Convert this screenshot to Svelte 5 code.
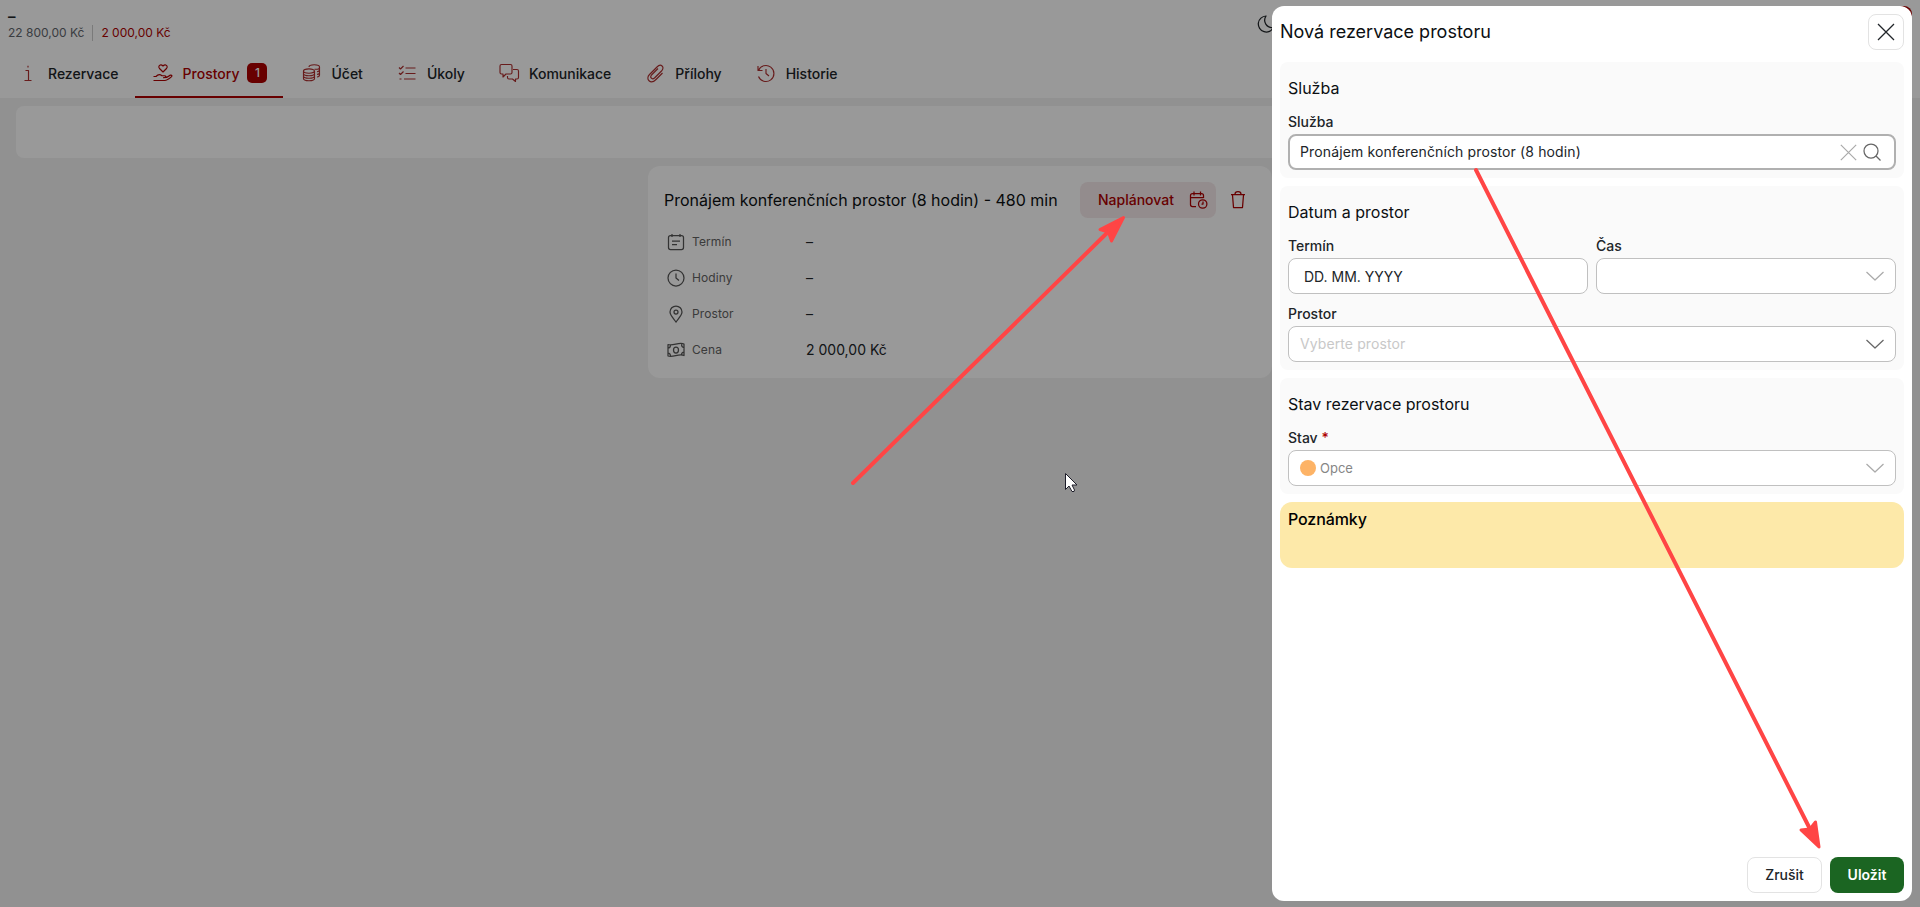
<script lang="ts">
	const tabs = [
		{ icon: 'info', label: 'Rezervace' },
		{ icon: 'hand', label: 'Prostory', count: 1 },
		{ icon: 'coins', label: 'Účet' },
		{ icon: 'tasks', label: 'Úkoly' },
		{ icon: 'chat', label: 'Komunikace' },
		{ icon: 'clip', label: 'Přílohy' },
		{ icon: 'history', label: 'Historie' },
	]
	const rows = [
		{ icon: 'note', label: 'Termín', value: '–' },
		{ icon: 'clock', label: 'Hodiny', value: '–' },
		{ icon: 'pin', label: 'Prostor', value: '–' },
		{ icon: 'cash', label: 'Cena', value: '2 000,00 Kč' },
	]
	const icons: Record<string, string> = {
		info: 'M9.500 9.500h3v10M8.500 19.500h7M12 4.800v1.700',
		hand: 'M12 11L8.500 7.500C6.500 5 9.500 2.500 12 5C14.500 2.500 17.500 5 15.500 7.500zM2.500 19.500h11.500c2 0 6-3 7-4.500c-.5-1.500-2-1-3 0c-1.500 1.500-3 1.700-6 1.700M12 16.700h2c1.500-.5 1-2-.5-2H11c-2-1.500-4-1.500-6 .8H2.500',
		coins: 'M4.500 10a5.500 2.200 0 1 0 11 0a5.500 2.200 0 1 0-11 0v7.500c0 3 11 3 11 0v-7.500M4.500 12.500c0 3 11 3 11 0M4.500 15c0 3 11 3 11 0M10 6c0-3 10.500-3 10.500 0s-2 2.200-5 2.200M20.500 6v8c0 1-1 1.800-2.500 2M20.500 8.700c0 1-1 1.800-2.500 2M20.500 11.400c0 1-1 1.800-2.500 2',
		tasks: 'M4 6.500l1.500 1.500l3-3M4 12l1.500 1.500l3-3M4.500 18h2M10.500 7h10M10.500 12.500h10M9 18h11.500',
		chat: 'M4.500 3.500h9q1.500 0 1.500 1.500v6.500q0 1.500-1.500 1.500H9l-3 3v-3H4.500Q3 13 3 11.500V5q0-1.500 1.500-1.500zM16 8.500h4q1.500 0 1.500 1.500v6.500q0 1.500-1.500 1.500h-1.500v2.500l-3-2.500H12q-1.500 0-1.500-1.500V15',
		clip: 'M19.500 12l-6.500 6.500c-5.500 5.500-11-.5-6.500-5l7.500-7.500c4-4 8 0 4.500 4l-7 7c-2.500 2-5-.5-3-3l6.500-6.500',
		history: 'M4 5v4.500h4.500M4.500 9.500a8 8 0 1 1 0 6M12 8v4.500l3 2.500',
		note: 'M6.500 5.500h11q2 0 2 2v10q0 2-2 2h-11q-2 0-2-2v-10q0-2 2-2zM8 4v3M16 4v3M8 11h8M8 14.500h5',
		clock: 'M4 12a8 8 0 1 0 16 0a8 8 0 1 0-16 0M12 7.500V12l3 2.500',
		pin: 'M12 20c-3-4-6-7-6-10a6 6 0 0 1 12 0c0 3-3 6-6 10zM10 10a2 2 0 1 0 4 0a2 2 0 1 0-4 0',
		cash: 'M4 6.500c5 2 11-3 16-.5v11.500c-5-2.500-11 2.500-16 .5zM9.500 12a2.500 3 0 1 0 5 0a2.500 3 0 1 0-5 0M4 10q2.500 0 2.500-3M20 9.500q-2.500 0-2.500-4M4 15q2.500 0 2.500 3.500M20 14q-2.500 0-2.500 3',
		plan: 'M10 18.500H6.500q-2 0-2-2v-9q0-2 2-2h9q2 0 2 2v2.500M8 3.500v4M14.500 3.500v4M4.500 9.500h13M12.500 16a4.200 4.200 0 1 0 8.400 0a4.200 4.200 0 1 0-8.400 0M17 13.500v2.500h-1.500',
		trash: 'M5 6.500h14M9 6q0-2.500 3-2.500t3 2.500M6.500 7l1 12.500h9l1-12.500',
		close: 'M4 4l16 16M20 4L4 20',
		search: 'M4 11a7 7 0 1 0 14 0a7 7 0 1 0-14 0M16 16l4.500 4.500',
		chevron: 'M3.500 8l8.500 8l8.500-8',
		moon: 'M12 4a8 8 0 1 0 7.500 11.500c-7 1-11-6-7.500-11.500z',
	}
</script>

{#snippet icon(name: string, size = 24)}
	<svg class="icon" width={size} height={size} viewBox="0 0 24 24"><path d={icons[name]} /></svg>
{/snippet}

{#snippet select(color: string)}
	<span class="chevron {color}">{@render icon('chevron')}</span>
{/snippet}

<div class="page">
	<header>
		<div class="top">
			<div>
				<div class="name">–</div>
				<div class="sums">
					<span>22 800,00 Kč</span>
					<span class="due">2 000,00 Kč</span>
				</div>
			</div>
			<div class="tools">
				{@render icon('moon')}
				<span class="avatar"></span>
			</div>
		</div>
		<nav>
			{#each tabs as tab}
				<a class:active={tab.count}>
					{@render icon(tab.icon)}
					<span>{tab.label}</span>
					{#if tab.count}<b>{tab.count}</b>{/if}
				</a>
			{/each}
		</nav>
	</header>

	<main>
		<div class="strip"></div>
		<article>
			<div class="card-head">
				<h2>Pronájem konferenčních prostor (8 hodin) - 480 min</h2>
				<button class="plan"><span>Naplánovat</span> {@render icon('plan')}</button>
				<button class="trash" aria-label="Smazat">{@render icon('trash')}</button>
			</div>
			{#each rows as row}
				<div class="row">
					{@render icon(row.icon)}
					<span class="key">{row.label}</span>
					<span>{row.value}</span>
				</div>
			{/each}
		</article>
	</main>
</div>

<div class="overlay">
	<aside>
		<div class="drawer-head">
			<h1>Nová rezervace prostoru</h1>
			<button class="close" aria-label="Zavřít">{@render icon('close', 24)}</button>
		</div>

		<section>
			<h3>Služba</h3>
			<div class="label">Služba</div>
			<div class="field focused">
				<span class="service">Pronájem konferenčních prostor (8 hodin)</span>
				<span class="light">{@render icon('close', 23)}</span>
				<span class="mid">{@render icon('search')}</span>
			</div>
		</section>

		<section>
			<h3>Datum a prostor</h3>
			<div class="pair">
				<div>
					<div class="label">Termín</div>
					<div class="field date"><span>DD. MM. YYYY</span></div>
				</div>
				<div>
					<div class="label">Čas</div>
					<div class="field">{@render select('light')}</div>
				</div>
			</div>
			<div class="label">Prostor</div>
			<div class="field"><span class="placeholder">Vyberte prostor</span>{@render select('mid')}</div>
		</section>

		<section>
			<h3>Stav rezervace prostoru</h3>
			<div class="label">Stav <em>*</em></div>
			<div class="field">
				<i class="dot"></i><span class="state">Opce</span>{@render select('light')}
			</div>
		</section>

		<div class="notes">Poznámky</div>

		<footer>
			<button class="cancel">Zrušit</button>
			<button class="save">Uložit</button>
		</footer>
	</aside>
</div>

<svg class="marks" width="1920" height="907" viewBox="0 0 1920 907">
	<g class="arrow">
		<path d="M853 483L1109 231" />
		<path class="tip" d="M1123.500 217.500L1100 229.500L1108.500 232L1111.500 241z" />
	</g>
	<g class="arrow">
		<path d="M1476 170L1811 831" />
		<path class="tip" d="M1819 847L1801 830L1810 829L1815.500 822z" />
	</g>
	<path class="cursor" d="M1065.500 473.500v16l3.500-3.500l3 5.500h2l.5-1.500l-2.500-5h5z" />
</svg>

<style>
	:global(body) {
		background: #f2f2f2;
		font-family: Inter, sans-serif;
		font-size: 14px;
		color: #212529;
		overflow: hidden;
	}
	h1,
	h2,
	h3 {
		margin: 0;
		font-weight: 400;
		color: #0c0f12;
	}
	button {
		font: inherit;
		padding: 0;
		border: 0;
		background: none;
		color: inherit;
		box-sizing: border-box;
		height: 36px;
		border-radius: 8px;
		display: flex;
		align-items: center;
		justify-content: center;
	}
	.icon {
		display: block;
		flex: none;
		fill: none;
		stroke: currentColor;
		stroke-width: 1.25;
		stroke-linejoin: round;
	}
	.page {
		height: 907px;
	}
	header {
		height: 98px;
		background: #fff;
	}
	.top {
		display: flex;
		justify-content: space-between;
		height: 50px;
		padding: 0 8px;
	}
	.name {
		font-size: 15px;
		font-weight: 600;
		line-height: 20px;
		padding-top: 7px;
		height: 17px;
	}
	.sums {
		display: flex;
		font-size: 12px;
		line-height: 16px;
		margin-top: 1px;
		color: #5f666d;
	}
	.due {
		color: #ad0000;
		border-left: 1px solid #ccc;
		margin-left: 8px;
		padding-left: 8px;
	}
	.tools {
		display: flex;
		width: 658px;
		padding-top: 12px;
		box-sizing: border-box;
		justify-content: space-between;
	}
	.avatar {
		width: 36px;
		height: 36px;
		border-radius: 8px;
		margin-top: -6px;
		background: #ad0000;
	}
	nav {
		display: flex;
	}
	nav a {
		display: flex;
		align-items: center;
		gap: 8px;
		height: 46px;
		padding: 0 16px;
		font-weight: 500;
		border-bottom: 2px solid transparent;
	}
	nav .icon {
		color: #ad3030;
		stroke-width: 1.15;
	}
	nav .active {
		color: #ad0000;
		border-color: #ad0000;
	}
	nav .active .icon {
		color: #ad0000;
	}
	nav b {
		width: 20px;
		line-height: 20px;
		border-radius: 5px;
		background: #ad0000;
		color: #fff;
		text-align: center;
		font-size: 12px;
		font-weight: 500;
	}
	main {
		padding: 8px 16px;
	}
	.strip {
		height: 52px;
		border-radius: 8px;
		background: #fff;
	}
	article {
		box-sizing: border-box;
		width: 624px;
		height: 212px;
		margin: 8px auto;
		padding: 16px 12px 16px 16px;
		border-radius: 12px;
		background: #fff;
	}
	.card-head {
		display: flex;
		height: 41px;
	}
	h2 {
		flex: 1;
		font-size: 16px;
		line-height: 36px;
		white-space: nowrap;
	}
	.plan {
		width: 136px;
		justify-content: space-between;
		padding: 0 6px 0 18px;
		background: #f6e9eb;
		color: #ad0000;
		font-weight: 500;
	}
	.plan span {
		padding-bottom: 1px;
	}
	.trash {
		width: 44px;
		color: #ad0000;
	}
	.row {
		display: flex;
		align-items: center;
		height: 36px;
	}
	.row .icon {
		color: #555;
		margin-top: 1px;
	}
	.key {
		width: 114px;
		padding-left: 4px;
		font-size: 12px;
		letter-spacing: 0.1px;
		color: #636363;
	}
	/* dims the page and keeps the drawer at the right edge */
	.overlay {
		position: fixed;
		inset: 0;
		display: flex;
		justify-content: flex-end;
		padding: 6px 8px;
		background: rgba(0, 0, 0, 0.4);
	}
	aside {
		box-sizing: border-box;
		width: 640px;
		padding: 8px;
		border-radius: 12px;
		background: #fff;
		display: flex;
		flex-direction: column;
		gap: 8px;
	}
	.drawer-head {
		display: flex;
		justify-content: space-between;
		height: 40px;
	}
	h1 {
		font-size: 18px;
		line-height: 36px;
	}
	.close {
		width: 36px;
		border: 1px solid #e3e3e3;
	}
	section {
		padding: 8px;
		border-radius: 8px;
		background: #fafafa;
	}
	h3 {
		font-size: 16px;
		line-height: 36px;
		margin-bottom: 4px;
	}
	.label {
		font-weight: 500;
		line-height: 24px;
	}
	em {
		color: #ad0000;
		font-style: normal;
	}
	.field {
		box-sizing: border-box;
		display: flex;
		align-items: center;
		height: 36px;
		padding: 0 8px 0 11px;
		border: 1px solid #c0c0c0;
		border-radius: 8px;
		background: #fff;
	}
	.focused {
		padding: 0 10px;
		border: 2px solid #b0b0b0;
	}
	.service {
		flex: 1;
		padding-bottom: 1px;
		letter-spacing: 0.13px;
	}
	.date {
		padding-left: 15px;
	}
	.light {
		color: #aaa;
	}
	.mid {
		color: #666;
	}
	.chevron {
		margin-left: auto;
	}
	.placeholder {
		color: #c8c8c8;
		letter-spacing: 0.1px;
		padding-bottom: 1px;
	}
	.pair {
		display: grid;
		grid-template-columns: 1fr 1fr;
		gap: 8px;
		margin-bottom: 8px;
	}
	.dot {
		width: 16px;
		height: 16px;
		border-radius: 50%;
		background: #fdb366;
		margin-right: 4px;
	}
	.state {
		font-size: 13px;
		color: #868686;
	}
	.notes {
		box-sizing: border-box;
		height: 66px;
		padding: 7px 8px;
		border-radius: 12px;
		background: #fde9a9;
		color: #000;
		font-size: 16px;
		font-weight: 500;
		letter-spacing: -0.1px;
		line-height: 20px;
	}
	footer {
		display: flex;
		justify-content: flex-end;
		gap: 8px;
		margin-top: auto;
	}
	footer button {
		padding-bottom: 1px;
	}
	.cancel {
		width: 75px;
		border: 1px solid #e3e3e3;
		font-weight: 500;
	}
	.save {
		width: 74px;
		background: #1b6522;
		color: #fff;
		font-weight: 600;
	}
	.marks {
		position: fixed;
		inset: 0;
		pointer-events: none;
	}
	.arrow path {
		fill: none;
		stroke: #ff4545;
		stroke-width: 4;
		stroke-linecap: round;
		stroke-linejoin: round;
	}
	.arrow .tip {
		fill: #ff4545;
		stroke-width: 3;
	}
	.cursor {
		fill: #fff;
		stroke: #1c1c28;
	}
</style>
